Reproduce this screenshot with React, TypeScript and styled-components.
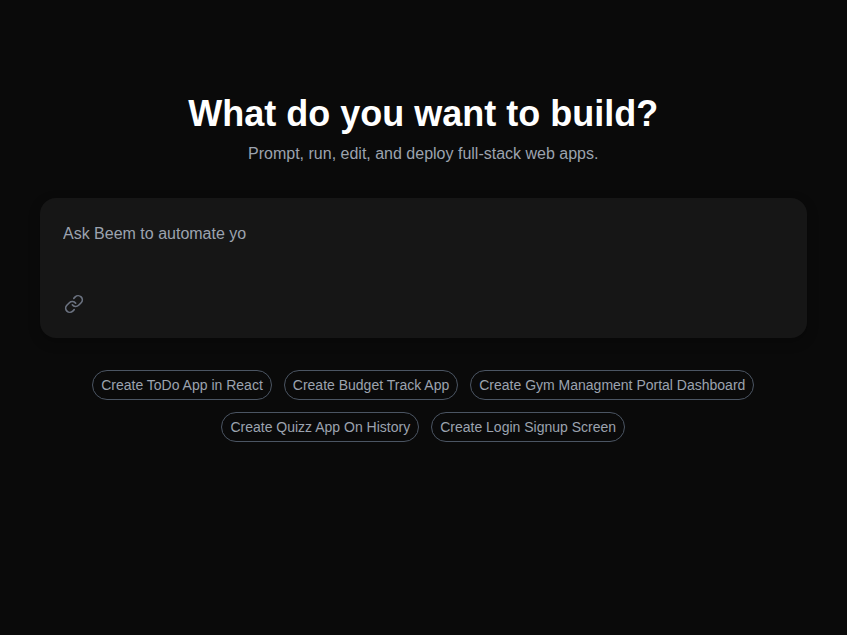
import styled, { createGlobalStyle } from 'styled-components';
import { Link } from 'lucide-react';

const suggestions = [
    'Create ToDo App in React',
    'Create Budget Track App',
    'Create Gym Managment Portal Dashboard',
    'Create Quizz App On History',
    'Create Login Signup Screen',
];

function App() {
    return (
        <Page>
            <GlobalStyle />
            <Title>What do you want to build?</Title>
            <Subtitle>Prompt, run, edit, and deploy full-stack web apps.</Subtitle>
            <PromptCard>
                <PromptInput placeholder="Ask Beem to automate yo" />
                <AttachIcon size={20} color="#6b7280" strokeWidth={2} />
            </PromptCard>
            <Chips>
                {suggestions.map((text) => (
                    <Chip key={text}>{text}</Chip>
                ))}
            </Chips>
        </Page>
    )
}

export default App;

const GlobalStyle = createGlobalStyle`
    html, body {
        margin: 0;
        padding: 0;
        background: #0a0a0a;
    }
    * {
        box-sizing: border-box;
    }
`

const Page = styled.div`
    display: flex;
    flex-direction: column;
    align-items: center;
    min-height: 635px;
    padding: 94px 40px 0 39.5px;
    background: #0a0a0a;
    font-family: "Liberation Sans", Arial, sans-serif;
`

const Title = styled.h2`
    margin: 0;
    font-size: 36px;
    line-height: 40px;
    font-weight: 700;
    color: #ffffff;
`

const Subtitle = styled.p`
    margin: 10px 0 0;
    font-size: 16px;
    line-height: 20px;
    color: #9ca3af;
`

const PromptCard = styled.div`
    display: flex;
    flex-direction: column;
    align-items: flex-start;
    width: 100%;
    height: 140px;
    margin-top: 34px;
    padding: 24px 23.5px;
    border-radius: 16px;
    background: #161616;
    box-shadow: 0 4px 12px rgba(0, 0, 0, 0.25);
`

const PromptInput = styled.textarea`
    flex: 1;
    width: 100%;
    padding: 1px 0 0;
    border: none;
    outline: none;
    resize: none;
    background: transparent;
    font-family: inherit;
    font-size: 16px;
    line-height: 22px;
    color: #9ca3af;

    &::placeholder {
        color: #9ca3af;
        opacity: 1;
    }
`

const AttachIcon = styled(Link)`
    margin-left: 0.5px;
`

const Chips = styled.div`
    display: flex;
    flex-wrap: wrap;
    justify-content: center;
    gap: 12px;
    width: 100%;
    max-width: 672px;
    margin-top: 32px;
`

const Chip = styled.button`
    height: 30px;
    padding: 0 8px;
    border: 1px solid #4b5563;
    border-radius: 9999px;
    background: transparent;
    font-family: inherit;
    font-size: 14px;
    line-height: 20px;
    color: #9ca3af;
    cursor: pointer;
`
